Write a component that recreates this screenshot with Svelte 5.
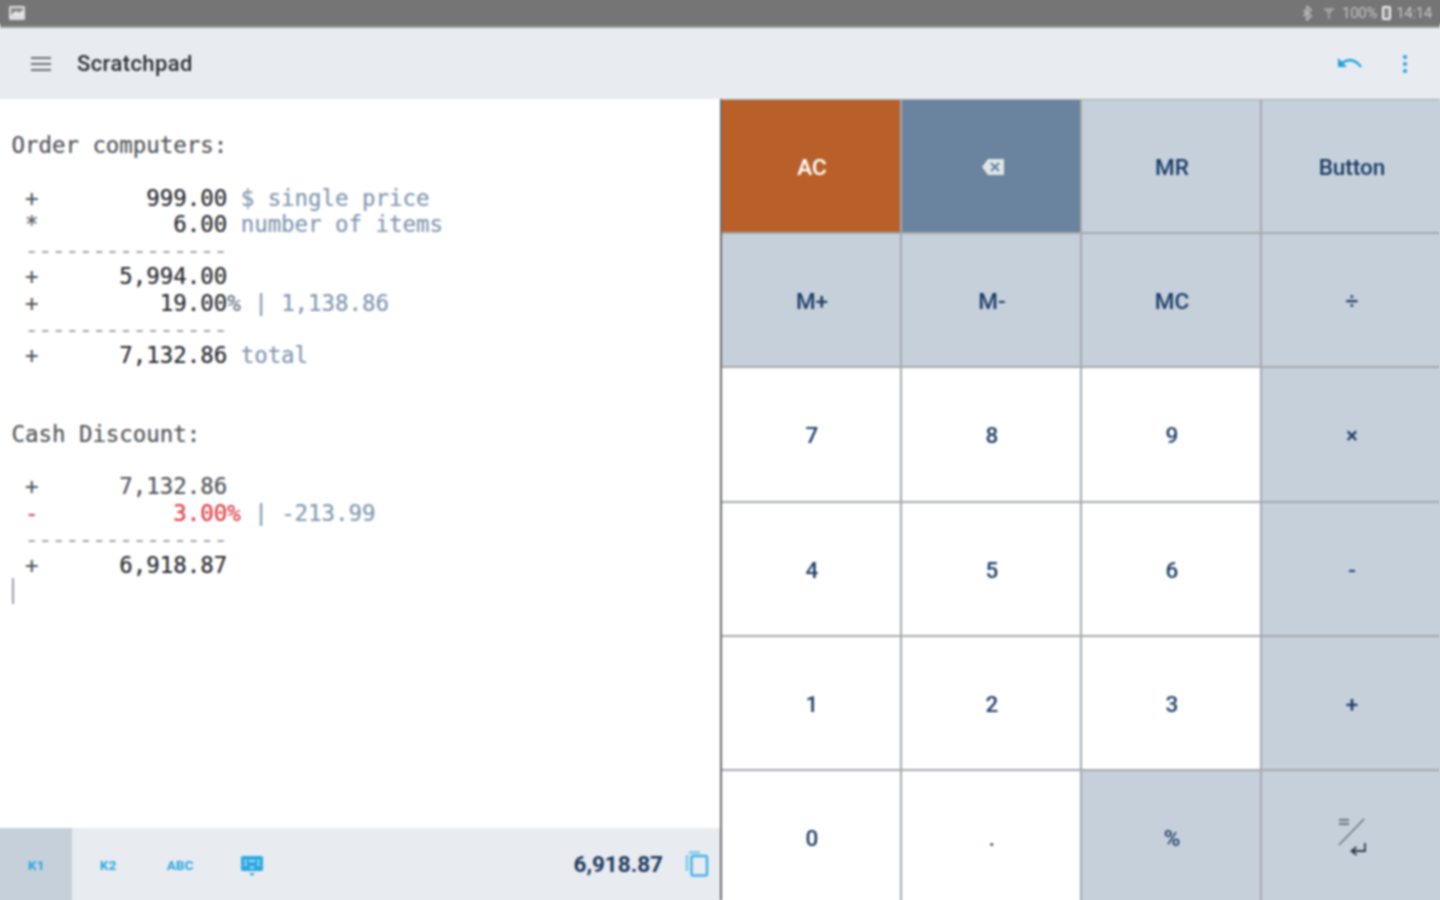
<script lang="ts">
	type Seg = { t: string; c?: string };

	const lines: Seg[][] = [
		[{ t: 'Order computers:', c: 'head' }],
		[],
		[{ t: ' +', c: 'op' }, { t: '        999.00' }, { t: ' $ single price', c: 'note' }],
		[{ t: ' *', c: 'op' }, { t: '          6.00' }, { t: ' number of items', c: 'note' }],
		[{ t: ' ---------------', c: 'rule' }],
		[{ t: ' +', c: 'op' }, { t: '      5,994.00' }],
		[{ t: ' +', c: 'op' }, { t: '         19.00' }, { t: '%', c: 'pct' }, { t: ' | 1,138.86', c: 'note' }],
		[{ t: ' ---------------', c: 'rule' }],
		[{ t: ' +', c: 'op' }, { t: '      7,132.86' }, { t: ' total', c: 'note' }],
		[],
		[],
		[{ t: 'Cash Discount:', c: 'head' }],
		[],
		[{ t: ' +', c: 'op' }, { t: '      7,132.86', c: 'soft' }],
		[{ t: ' -', c: 'red' }, { t: '          3.00%', c: 'red' }, { t: ' | -213.99', c: 'note' }],
		[{ t: ' ---------------', c: 'rule' }],
		[{ t: ' +', c: 'op' }, { t: '      6,918.87' }]
	];

	const keys = [
		{ label: 'AC', kind: 'clear' },
		{ label: '', kind: 'back', icon: 'back' },
		{ label: 'MR', kind: 'fn' },
		{ label: 'Button', kind: 'fn' },
		{ label: 'M+', kind: 'fn' },
		{ label: 'M-', kind: 'fn' },
		{ label: 'MC', kind: 'fn' },
		{ label: '÷', kind: 'fn' },
		{ label: '7', kind: 'num' },
		{ label: '8', kind: 'num' },
		{ label: '9', kind: 'num' },
		{ label: '×', kind: 'fn' },
		{ label: '4', kind: 'num' },
		{ label: '5', kind: 'num' },
		{ label: '6', kind: 'num' },
		{ label: '-', kind: 'fn' },
		{ label: '1', kind: 'num' },
		{ label: '2', kind: 'num' },
		{ label: '3', kind: 'num' },
		{ label: '+', kind: 'fn' },
		{ label: '0', kind: 'num' },
		{ label: '.', kind: 'num' },
		{ label: '%', kind: 'fn' },
		{ label: '', kind: 'fn', icon: 'enter' }
	];
</script>

<div class="device">
	<header class="status">
		<svg class="shot" width="18" height="16" viewBox="0 0 18 16" aria-hidden="true">
			<rect x="1" y="1" width="16" height="14" rx="1.5" fill="#dcdcdc" />
			<rect x="3" y="3" width="12" height="7" fill="#8b8b8b" />
			<path d="M3 10 L8 6 L11 8 L15 5 V10 Z" fill="#e8e8e8" />
		</svg>
		<span class="status-gap"></span>
		<svg class="bt" width="10" height="16" viewBox="0 0 10 16" aria-hidden="true">
			<path d="M5 1 L9 5 L6 8 L9 11 L5 15 V1 M1.5 5 L5 8 L1.5 11" fill="none" stroke="#b9b9b9" stroke-width="1.7" />
		</svg>
		<svg class="signal" width="14" height="14" viewBox="0 0 14 14" aria-hidden="true">
			<path d="M1 2 H13 L8 7.5 V13 H6 V7.5 Z" fill="#a0a0a0" />
		</svg>
		<span class="status-text">100%</span>
		<span class="battery"></span>
		<span class="status-text">14:14</span>
	</header>

	<div class="toolbar">
		<svg class="menu" width="22" height="16" viewBox="0 0 22 16" aria-hidden="true">
			<path d="M1 2 H21 M1 8 H21 M1 14 H21" stroke="#6c7074" stroke-width="2" />
		</svg>
		<h1>Scratchpad</h1>
		<span class="toolbar-gap"></span>
		<svg class="undo" width="26" height="14" viewBox="0 0 26 14" aria-hidden="true">
			<path d="M1 1 V10 H10 L6.5 6.6 C11 3 18 3.5 23 10.5 L25 9.5 C19.5 1 11 0 4.8 4.8 Z" fill="#1fa2df" />
		</svg>
		<svg class="more" width="6" height="20" viewBox="0 0 6 20" aria-hidden="true">
			<circle cx="3" cy="3" r="2" fill="#1fa2df" />
			<circle cx="3" cy="10" r="2" fill="#1fa2df" />
			<circle cx="3" cy="17" r="2" fill="#1fa2df" />
		</svg>
	</div>

	<main class="body">
		<section class="pad">
			<div class="sheet">
				{#each lines as line}
					<div class="line">{#each line as seg}<span class={seg.c}>{seg.t}</span>{/each}</div>
				{/each}
				<div class="line"><span class="caret"></span></div>
			</div>
			<footer class="tabs">
				<span class="tab active">K1</span>
				<span class="tab">K2</span>
				<span class="tab">ABC</span>
				<span class="tab">
					<svg class="kbd" width="24" height="22" viewBox="0 0 24 22" aria-hidden="true">
						<path d="M2.5 1 H21.5 A1.5 1.5 0 0 1 23 2.5 V14.5 A1.5 1.5 0 0 1 21.5 16 H2.5 A1.5 1.5 0 0 1 1 14.5 V2.5 A1.5 1.5 0 0 1 2.5 1 Z" fill="#2aa8e2" />
						<path d="M4 6 H7 M9 6 H15 M17 6 H20 M4 9.5 H7 M10 12.5 H14 M17 9.5 H20" stroke="#dfeaf3" stroke-width="1.5" />
						<path d="M9 18 H15 L12 21 Z" fill="#2aa8e2" />
					</svg>
				</span>
				<span class="result">6,918.87</span>
				<svg class="copy" width="24" height="26" viewBox="0 0 24 26" aria-hidden="true">
					<path d="M2 4 V20 M4 1.5 H15" stroke="#7cc8ee" stroke-width="2.5" fill="none" />
					<rect x="6.5" y="5" width="15.5" height="19.5" rx="1.5" fill="none" stroke="#45b3e8" stroke-width="2.5" />
				</svg>
			</footer>
		</section>

		<section class="keypad">
			{#each keys as key}
				<button class="key {key.kind}" type="button">
					{#if key.icon === 'back'}
						<svg class="del" width="24" height="18" viewBox="0 0 24 18" aria-hidden="true">
							<path d="M7 1 H23 V17 H7 L1 9 Z" fill="#dfe5ea" />
							<path d="M10 5 L18 13 M18 5 L10 13" stroke="#6a839e" stroke-width="2.2" />
						</svg>
					{:else if key.icon === 'enter'}
						<svg class="enter" width="30" height="42" viewBox="0 0 30 42" aria-hidden="true">
							<path d="M1 2 H11 M1 6 H11" stroke="#6d747b" stroke-width="2.2" />
							<path d="M1 27 L26 1" stroke="#6d747b" stroke-width="1.5" />
							<path d="M27 25 V33 H15" fill="none" stroke="#2d3a46" stroke-width="1.8" />
							<path d="M18.5 29 L13.5 33 L18.5 37" fill="none" stroke="#2d3a46" stroke-width="1.8" />
						</svg>
					{:else}
						{key.label}
					{/if}
				</button>
			{/each}
		</section>
	</main>
</div>

<style>
	:global(html),
	:global(body) {
		overflow: hidden;
	}
	:global(body) {
		margin: 0;
		background: #fff;
	}
	.device {
		width: 1440px;
		height: 900px;
		display: flex;
		flex-direction: column;
		font-family: Roboto, "Liberation Sans", sans-serif;
		filter: blur(0.8px);
	}

	/* the box-shadows below run past the window so the blur doesn't fade at the edges */
	.status {
		height: 26px;
		flex-shrink: 0;
		background: #757575;
		box-shadow: 0 -4px 0 #757575, 4px -4px 0 #757575, -4px -4px 0 #757575;
		border-bottom: 2px solid #9b9d9f;
		display: flex;
		align-items: center;
		padding: 0 8px;
		color: #c4c4c4;
		font-size: 15px;
	}
	.status-gap { flex: 1; }
	.bt { margin-right: -5px; }
	.signal { margin: 0 6px 0 15px; }
	.status-text { letter-spacing: -0.3px; }
	.battery {
		width: 9px;
		height: 14px;
		margin: 0 5px;
		border-radius: 2px;
		background: #8a8a8a;
		border: 2.5px solid #f2f2f2;
		box-sizing: border-box;
	}

	.toolbar {
		height: 71px;
		flex-shrink: 0;
		background: #e8ecf1;
		box-shadow: 4px 0 0 #e8ecf1, -4px 0 0 #e8ecf1;
		display: flex;
		align-items: center;
		padding: 0 32px 0 30px;
	}
	.toolbar h1 {
		margin: 0 0 0 25px;
		font-size: 22px;
		font-weight: 500;
		color: #2c3034;
		letter-spacing: 0.4px;
	}
	.toolbar-gap { flex: 1; }
	.undo { margin-right: 39px; }

	.body {
		flex: 1;
		min-height: 0;
		display: flex;
	}

	.pad {
		width: 720px;
		flex-shrink: 0;
		display: flex;
		flex-direction: column;
		background: #fff;
	}
	.sheet {
		flex: 1;
		padding: 33px 0 0 11.5px;
		font-family: "DejaVu Sans Mono", "Liberation Mono", monospace;
		font-size: 22.4px;
		line-height: 26.25px;
		font-weight: 500;
		color: #26292d;
		-webkit-text-stroke: 0.2px currentColor;
	}
	.line {
		height: 26.25px;
		white-space: pre;
	}
	.head { color: #4f5459; }
	.op { color: #4f5459; }
	.note { color: #8298b1; }
	.rule { color: #9ca0a4; }
	.pct { color: #66727f; }
	.soft { color: #4f5357; }
	.red { color: #e0383e; }
	.caret {
		display: inline-block;
		width: 2px;
		height: 26px;
		margin-left: 0.5px;
		background: #9a9ea2;
	}

	.tabs {
		height: 72px;
		flex-shrink: 0;
		background: #e8ecf1;
		box-shadow: 0 4px 0 #e8ecf1;
		display: flex;
		align-items: center;
		padding-right: 11px;
	}
	.tab {
		width: 72px;
		height: 100%;
		padding-top: 2px;
		box-sizing: border-box;
		display: flex;
		align-items: center;
		justify-content: center;
		font-size: 13.5px;
		font-weight: 700;
		color: #2aa8e2;
	}
	.tab.active {
		background: #c5d0db;
		box-shadow: 0 4px 0 #c5d0db, -4px 0 0 #c5d0db, -4px 4px 0 #c5d0db;
	}
	.kbd { margin-top: 1px; }
	.result {
		margin-left: auto;
		margin-right: 22px;
		font-size: 22.5px;
		font-weight: 700;
		color: #1e3a5f;
	}

	.keypad {
		flex: 1;
		display: grid;
		grid-template-columns: repeat(4, 1fr);
		grid-auto-rows: 132.2px;
		gap: 2px;
		align-content: start;
		background: #a5a9ad;
		border-left: 2px solid #66696c;
		box-shadow: 0 4px 0 #a5a9ad;
		padding-top: 1px;
	}
	.key {
		border: 0;
		padding: 2px 0 0 2px;
		display: flex;
		align-items: center;
		justify-content: center;
		font-family: inherit;
		font-size: 22.5px;
		font-weight: 500;
		color: #1c3d66;
	}
	.key.clear { background: #b9602a; color: #fff; }
	.key.back { background: #6a839e; }
	.key.fn { background: #c5d0db; }
	.key.fn:nth-child(4n) { box-shadow: 4px 0 0 #c5d0db; }
	.key.num { background: #fff; }
	.del { margin-left: 1px; }
	.enter { margin: 2px 0 0 2px; }
</style>
